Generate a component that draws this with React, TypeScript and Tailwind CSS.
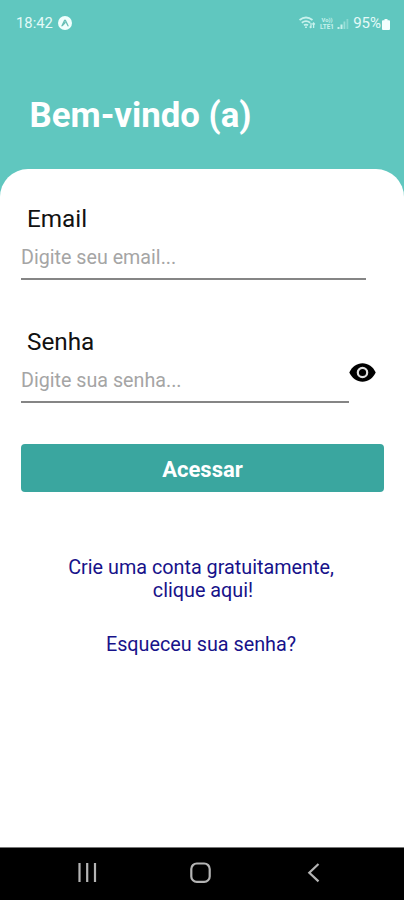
import React from "react";

function StatusBar() {
  return (
    <div className="flex h-[46px] items-center justify-between pl-[16px] pr-[14px] text-[#e4faf8]">
      <div className="flex items-center gap-[5px]">
        <span className="pt-px text-[14.8px] leading-none">18:42</span>
        <svg width="14" height="14" viewBox="0 0 14 14">
          <circle cx="7" cy="7" r="7" fill="#f0fffd" />
          <path d="M4 9.800 6.500 4.600q.5-.8 1 0L10 9.800M4.600 9.300 7 6.800" fill="none" stroke="#68bfb6" strokeWidth="1.300" strokeLinecap="round" />
        </svg>
      </div>
      <div className="flex items-center">
        <svg width="52" height="16" viewBox="0 0 52 16" fill="none" stroke="#c8f2ed" className="mr-[2px]">
          <path d="M.5 5Q7 0 13.500 5M2.800 7.800q4.200-3.200 8.400 0M5 10.300q2-1.500 4 0M7 11.500v1.500" strokeWidth="1.800" />
          <path d="M12 13V8m-1.300 3.500 1.300 1.500M14.600 8v5m-1.200-3.500L14.600 8l1.200 1.500" strokeWidth="1.300" />
          <g fill="#c8f2ed" stroke="none">
            <rect x="38.500" y="12" width="2" height="2" />
            <rect x="41.500" y="9.500" width="2" height="4.500" />
            <rect x="44.500" y="6.500" width="1.800" height="7.500" opacity=".55" />
            <rect x="47.500" y="4" width="1.800" height="10" opacity=".4" />
            <text x="22.500" y="6.800" fontSize="6" fontWeight="700" textLength="11" lengthAdjust="spacingAndGlyphs">Vo))</text>
            <text x="21" y="14" fontSize="6.500" fontWeight="700" textLength="14" lengthAdjust="spacingAndGlyphs">LTE1</text>
          </g>
        </svg>
        <span className="pt-px text-[15px] leading-none">95%</span>
        <svg width="8" height="11" viewBox="0 0 8 11" className="ml-px mt-[3px]" fill="#f3fffe">
          <path d="M2.500 0h3v1.200H7q1 0 1 1V10q0 1-1 1H1q-1 0-1-1V2.200q0-1 1-1h1.500z" />
        </svg>
      </div>
    </div>
  );
}

function EyeIcon() {
  return (
    <svg width="27" height="19" viewBox="0 0 27 19">
      <path d="M.3 9.500C3 3.800 7.800.3 13.500.3S24 3.800 26.700 9.500C24 15.200 19.200 18.700 13.500 18.700S3 15.200.3 9.500Z" fill="#000" />
      <circle cx="13.500" cy="9.500" r="4.700" fill="none" stroke="#e0e0e0" strokeWidth="2.200" />
    </svg>
  );
}

function NavigationBar() {
  return (
    <nav className="flex h-[53px] border-t border-[#777] bg-black pt-[11px]">
      <svg width="404" height="28" viewBox="0 0 404 28" fill="none" stroke="#b4b4b4" strokeWidth="2.200">
        <path d="M79.500 4v19M87.200 4v19M95 4v19" />
        <rect x="191.300" y="4.500" width="18.400" height="18.400" rx="5.500" />
        <path d="m318.500 5-9.200 8.700 9.200 8.700" />
      </svg>
    </nav>
  );
}

export default function App() {
  return (
    <div className="flex h-[900px] w-[404px] flex-col overflow-hidden bg-[#60c7bf] font-['Roboto',sans-serif]">
      <header className="h-[169px] shrink-0">
        <StatusBar />
        <h1 className="mt-[49px] pl-[29.5px] text-[34.8px] font-bold leading-[40px] text-white">Bem-vindo (a)</h1>
      </header>
      <main className="flex grow flex-col rounded-t-[28px] bg-white px-[21px] pt-[34px]">
        <label className="pl-[6px] text-[24.3px] leading-[32px] text-[#111]">Email</label>
        <div className="h-[45px] w-[345px] border-b-2 border-[#858585] pt-[11px] text-[19.7px] leading-[24px] text-[#a5a5a5]">
          Digite seu email...
        </div>
        <label className="mt-[46px] pl-[6px] text-[24.3px] leading-[32px] text-[#111]">Senha</label>
        <div className="flex">
          <div className="h-[45px] w-[328px] border-b-2 border-[#858585] pt-[11px] text-[19.7px] leading-[24px] text-[#a5a5a5]">
            Digite sua senha...
          </div>
          <div className="pt-[5px]">
            <EyeIcon />
          </div>
        </div>
        <button className="mt-[41px] h-[48px] w-[363px] rounded-[4px] bg-[#3aa69f] pt-[3px] text-[22px] font-bold leading-none text-white">
          Acessar
        </button>
        <div className="mt-[64px] w-[360px] text-center text-[19.8px] leading-[23px] text-[#17128a]">
          <p>
            Crie uma conta gratuitamente,
            <br />
            <span className="pl-[4px]">clique aqui!</span>
          </p>
          <p className="mt-[31px]">Esqueceu sua senha?</p>
        </div>
      </main>
      <NavigationBar />
    </div>
  );
}
